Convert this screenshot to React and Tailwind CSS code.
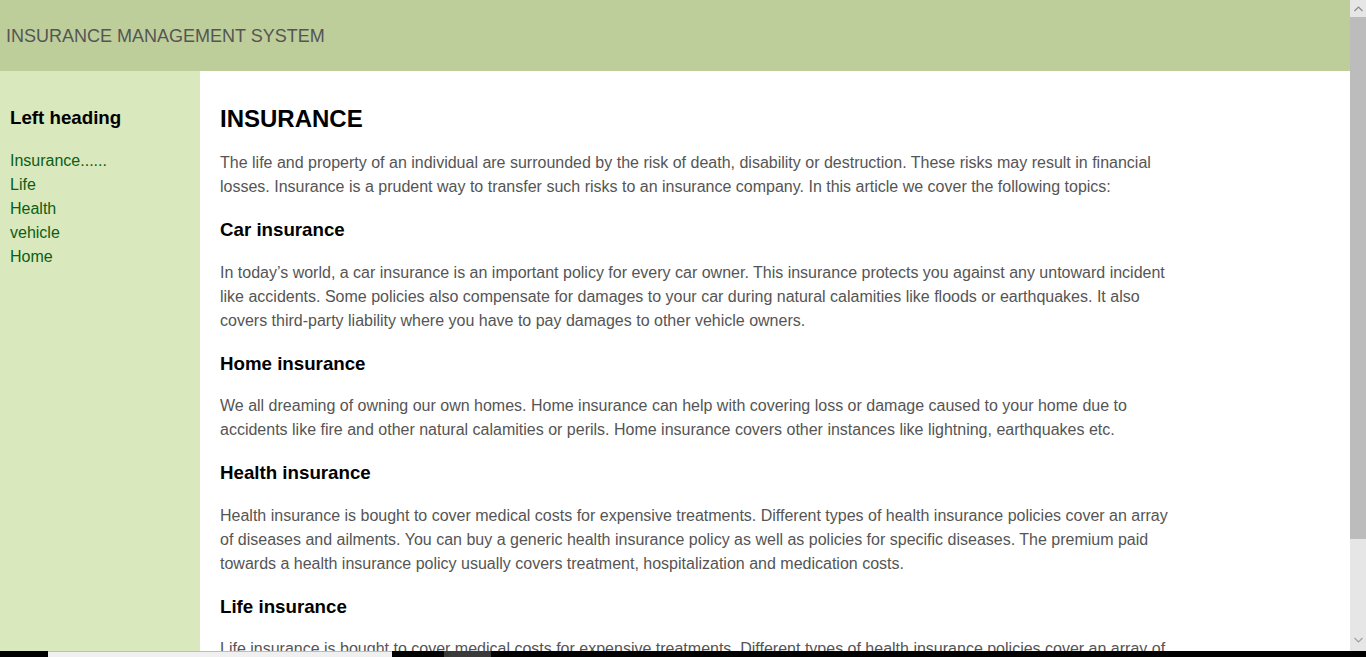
// App.jsx

const sections = [
  {
    title: "Car insurance",
    text: "In today’s world, a car insurance is an important policy for every car owner. This insurance protects you against any untoward incident like accidents. Some policies also compensate for damages to your car during natural calamities like floods or earthquakes. It also covers third-party liability where you have to pay damages to other vehicle owners.",
  },
  {
    title: "Home insurance",
    text: "We all dreaming of owning our own homes. Home insurance can help with covering loss or damage caused to your home due to accidents like fire and other natural calamities or perils. Home insurance covers other instances like lightning, earthquakes etc.",
  },
  {
    title: "Health insurance",
    text: "Health insurance is bought to cover medical costs for expensive treatments. Different types of health insurance policies cover an array of diseases and ailments. You can buy a generic health insurance policy as well as policies for specific diseases. The premium paid towards a health insurance policy usually covers treatment, hospitalization and medication costs.",
  },
  {
    title: "Life insurance",
    text: "Life insurance is bought to cover medical costs for expensive treatments. Different types of health insurance policies cover an array of diseases and ailments. You can buy a generic life insurance policy as well as policies for specific needs.",
  },
];

const links = ["Insurance......", "Life", "Health", "vehicle", "Home"];

export default function App() {
  return (
    <div
      className="relative flex h-[657px] w-full overflow-hidden bg-white"
      style={{ fontFamily: '"Liberation Sans", Arial, sans-serif' }}
    >
      {/* Page */}
      <div className="flex flex-1 flex-col min-w-0">
        {/* Header */}
        <header className="h-[71px] shrink-0 bg-[#bdce9a] flex items-center px-[6px]">
          <h1 className="text-[18px] leading-[22px] text-[#555555] pt-[1px]">
            INSURANCE MANAGEMENT SYSTEM
          </h1>
        </header>

        <div className="flex flex-1 min-h-0">
          {/* Sidebar */}
          <aside className="w-[200px] shrink-0 bg-[#d9e8bd] pt-[36px] px-[10px]">
            <h3 className="text-[18.72px] leading-[22px] font-bold text-black">
              Left heading
            </h3>
            <ul className="mt-[20px]">
              {links.map((l) => (
                <li key={l}>
                  <a href="#" className="text-[16px] leading-[24px] text-[#0b5e16]">
                    {l}
                  </a>
                </li>
              ))}
            </ul>
          </aside>

          {/* Main */}
          <main className="flex-1 pt-[34px] pl-[20px]">
            <div className="w-[960px]">
              <h2 className="text-[24px] leading-[28px] font-bold text-black mb-[18px]">
                INSURANCE
              </h2>
              <p className="text-[16px] leading-[24px] text-[#555555]">
                The life and property of an individual are surrounded by the risk of death, disability or destruction. These risks may result in financial losses. Insurance is a prudent way to transfer such risks to an insurance company. In this article we cover the following topics:
              </p>

              {sections.map((s) => (
                <div key={s.title}>
                  <h3 className="mt-[20px] mb-[20.5px] text-[18.72px] leading-[21px] font-bold text-black">
                    {s.title}
                  </h3>
                  <p className="text-[16px] leading-[24px] text-[#555555]">{s.text}</p>
                </div>
              ))}
            </div>
          </main>
        </div>
      </div>

      {/* Scrollbar */}
      <div className="w-[16px] shrink-0 flex flex-col bg-[#e6e6e6]">
        <div className="h-[17px] flex items-center justify-center">
          <svg width="9" height="6" viewBox="0 0 9 6" fill="none">
            <path d="M0.5 5 L4.5 1 L8.5 5" stroke="#8a8a8a" strokeWidth="1.2" />
          </svg>
        </div>
        <div className="h-[522px] bg-[#bcbcbc]" />
        <div className="flex-1" />
        <div className="h-[23px] flex items-start justify-center pt-[3px]">
          <svg width="9" height="6" viewBox="0 0 9 6" fill="none">
            <path d="M0.5 1 L4.5 5 L8.5 1" stroke="#a0a0a0" strokeWidth="1.2" />
          </svg>
        </div>
      </div>

      {/* Taskbar strip at the bottom edge */}
      <div className="absolute bottom-0 left-0 right-0 h-[6px] flex bg-black">
        <div className="w-[48px] bg-black" />
        <div className="w-[344px] bg-[#f0f0f0] border-t border-[#bdbdbd]" />
        <div className="w-[52px] bg-black" />
        <div className="w-[47px] bg-[#3a3a3a]" />
        <div className="flex-1 bg-black" />
      </div>
    </div>
  );
}
